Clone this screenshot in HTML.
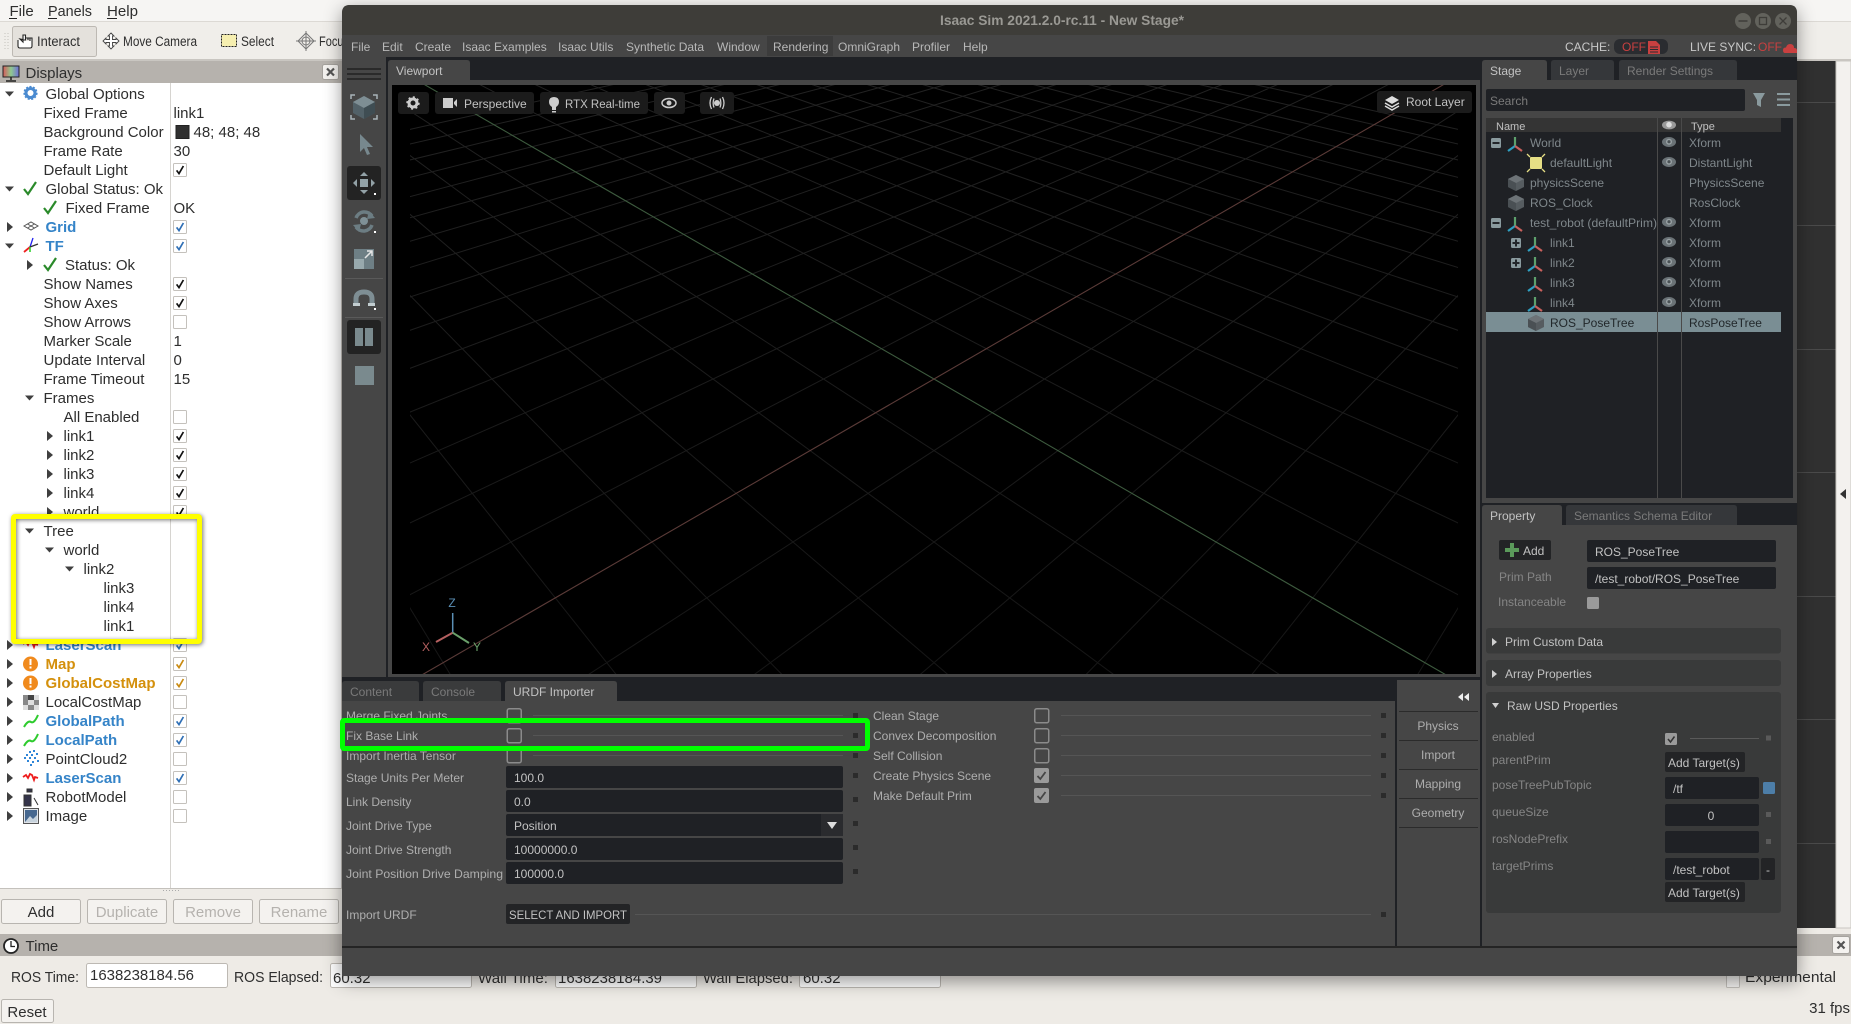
<!DOCTYPE html>
<html lang="en">
<head>
<meta charset="utf-8">
<title>Isaac Sim and RViz</title>
<style>
html,body{margin:0;padding:0;width:1851px;height:1024px;overflow:hidden;background:#eeebe6}
svg{display:block;position:absolute;left:0;top:0}
text{font-family:"Liberation Sans",sans-serif;white-space:pre}
.r{font-size:15px;fill:#2e2e2e}
.b{font-size:15px;fill:#3584c8;font-weight:bold}
.o{font-size:15px;fill:#d4900c;font-weight:bold}
.d{font-size:15px;fill:#b5b2ae}
.m{font-size:12px;fill:#b8b8b8}
.l{font-size:12px;fill:#aeaeae}
.g{font-size:12px;fill:#858585}
.t{font-size:12px;fill:#7f878b}
.f{font-size:12px;fill:#c2c2c2}
.i{font-size:12px;fill:#7a7a7a}
</style>
</head>
<body>
<svg xmlns="http://www.w3.org/2000/svg" width="1851" height="1024" viewBox="0 0 1851 1024">
<defs>
<filter id="sh" x="-5%" y="-5%" width="110%" height="110%"><feDropShadow dx="0" dy="5" stdDeviation="9" flood-color="#000" flood-opacity=".42"/></filter>
<linearGradient id="mon" x1="0" x2="1"><stop offset="0" stop-color="#d65a5a"/><stop offset=".5" stop-color="#8fc98f"/><stop offset="1" stop-color="#6f6fd8"/></linearGradient>
<linearGradient id="gl" gradientUnits="userSpaceOnUse" x1="0" y1="85" x2="0" y2="674"><stop offset="0" stop-color="#222"/><stop offset="1" stop-color="#161616"/></linearGradient>
<clipPath id="vp"><rect x="410" y="85" width="1048" height="589"/></clipPath>
<g id="cb"><rect x=".5" y=".5" width="13" height="13" rx="1" fill="#fff" stroke="#c4c1bc"/></g>
<g id="ck"><use href="#cb"/><path d="M3.6 7.4 6 10.6 10.4 3" fill="none" stroke="#111" stroke-width="1.7"/></g>
<g id="cu"><use href="#cb"/><path d="M3.6 7.4 6 10.6 10.4 3" fill="none" stroke="#2f6fb5" stroke-width="1.7"/></g>
<g id="co"><use href="#cb"/><path d="M3.6 7.4 6 10.6 10.4 3" fill="none" stroke="#c98a10" stroke-width="1.7"/></g>
<path id="tr" d="M0-5 6 0 0 5Z" fill="#3f3f3f"/>
<path id="td" d="M-4.5-2.5H4.5L0 2.5Z" fill="#3f3f3f"/>
<path id="gc" d="M0 7 4 12 12 0" fill="none" stroke="#2a8a2a" stroke-width="2.2"/>
<g id="las"><path d="M0 1 3-1 5 2 7-2 9-1 11 4 12 1 15 2" fill="none" stroke="#ee1c1c" stroke-width="1.8"/></g>
<g id="pth"><path d="M0 6Q4-1 7 1 10 3 14-6" fill="none" stroke="#2ecb2e" stroke-width="2"/></g>
<g id="ex" stroke-width="2.2" fill="none"><path d="M0 0V-9" stroke="#5da06c"/><path d="M0 0-7 5" stroke="#2e9fc0"/><path d="M0 0 7 5" stroke="#c8605c"/></g>
<g id="eye"><ellipse cx="0" cy="0" rx="7" ry="5" fill="#6a7276"/><circle cx="0" cy="-.3" r="3" fill="#9aa2a5"/><circle cx="0" cy="-.3" r="1.6" fill="#4a5255"/></g>
<g id="cube"><path d="M0-8 8-4V4L0 8-8 4V-4Z" fill="#565c60"/><path d="M0-8 8-4 0 0-8-4Z" fill="#6d7377"/><path d="M0 0V8L-8 4V-4Z" fill="#4a5054"/></g>
<path id="sq" d="M0 0H5V5H0Z" fill="#2b2b2b"/>
<g id="uc"><rect x=".75" y=".75" width="14" height="14" rx="2" fill="none" stroke="#8b8b8b" stroke-width="1.5"/></g>
<g id="uk"><rect width="15" height="15" rx="2" fill="#9a9a9a"/><path d="M3.5 8 6.3 11 11.5 4" fill="none" stroke="#454545" stroke-width="1.8"/></g>
<g id="minus"><rect x="-5" y="-5" width="10" height="10" rx="1.5" fill="#8a9a9e"/><rect x="-3.5" y="-1" width="7" height="2" fill="#23262a"/></g>
<g id="plus"><rect x="-5" y="-5" width="10" height="10" rx="1.5" fill="#8a9a9e"/><path d="M-3.5-1H-1V-3.5H1V-1H3.5V1H1V3.5H-1V1H-3.5Z" fill="#23262a"/></g>
</defs>

<!-- RViz base -->
<rect width="1851" height="1024" fill="#eeebe6"/>
<rect width="1851" height="22" fill="#f6f5f3"/>
<rect y="21" width="1851" height="1" fill="#dcd9d4"/>
<rect y="22" width="1851" height="38" fill="#f0eeea"/>
<rect y="59" width="1851" height="2" fill="#c9c6c1"/>
<text class="r" x="9.5" y="16">File</text><text class="r" x="48" y="16" textLength="44" lengthAdjust="spacingAndGlyphs">Panels</text><text class="r" x="107" y="16" textLength="31" lengthAdjust="spacingAndGlyphs">Help</text>
<rect x="9" y="18" width="8" height="1" fill="#222"/><rect x="48" y="18" width="9" height="1" fill="#222"/><rect x="107" y="18" width="10" height="1" fill="#222"/>
<path d="M5 33V49M8 33V49" stroke="#c4c1bc" stroke-width="1" stroke-dasharray="1 2"/>
<rect x="12.5" y="26.5" width="84" height="30" rx="2" fill="#e4e1dc" stroke="#bdb9b3"/>
<path d="M18 40V46Q18 48 20 48H30Q32 48 32 46V38H30V41M30 38H28V40M28 38H25.5V40M25.5 40V35H23V42L20 39Z" fill="#fff" stroke="#222" stroke-width="1.1"/>
<text class="r" style="font-size:13.5px" x="37" y="46" textLength="43" lengthAdjust="spacingAndGlyphs">Interact</text>
<path d="M111 33 114 36H112.5V39.5H116V38L119 41 116 44V42.5H112.5V46H114L111 49 108 46H109.5V42.5H106V44L103 41 106 38V39.5H109.5V36H108Z" fill="#fff" stroke="#444" stroke-width=".9"/>
<text class="r" style="font-size:13.5px" x="123" y="46" textLength="74" lengthAdjust="spacingAndGlyphs">Move Camera</text>
<rect x="221.5" y="34.5" width="15" height="12" fill="#f6efb0" stroke="#222" stroke-dasharray="2 1"/>
<text class="r" style="font-size:13.5px" x="241" y="46" textLength="33" lengthAdjust="spacingAndGlyphs">Select</text>
<path d="M306 33 314 41 306 49 298 41Z M306 31V51M296 41H316" fill="none" stroke="#777" stroke-width="1"/><circle cx="306" cy="41" r="4" fill="none" stroke="#777"/>
<text class="r" style="font-size:13.5px" x="319" y="46" textLength="30" lengthAdjust="spacingAndGlyphs">Focus</text>

<rect y="61" width="342" height="22" fill="#b6b2ad"/>
<rect x="3" y="66" width="16" height="11" fill="url(#mon)" stroke="#222" stroke-width="1"/><path d="M11 77V80M6 81H16" stroke="#222" stroke-width="1.5"/>
<text class="r" x="25.5" y="78">Displays</text>
<rect x="322.5" y="64.5" width="16" height="15" rx="2" fill="#f4f2ef" stroke="#a5a29d"/><path d="M327 68.5 334 75.5M334 68.5 327 75.5" stroke="#555" stroke-width="2.2"/>

<rect y="83" width="341" height="805" fill="#fff"/>
<rect x="170" y="83" width="1" height="805" fill="#d6d4d0"/>
<rect y="888" width="342" height="1" fill="#c4c1bc"/>
<rect x="341" y="83" width="1" height="805" fill="#c4c1bc"/>
<path d="M163 890.5H180" stroke="#aaa" stroke-dasharray="1 2"/>

<!-- arrows -->
<use href="#td" x="9.5" y="94"/><use href="#td" x="9.5" y="189"/><use href="#tr" x="7" y="227"/><use href="#td" x="9.5" y="246"/><use href="#tr" x="27" y="265"/><use href="#td" x="29.5" y="398"/>
<use href="#tr" x="47" y="436"/><use href="#tr" x="47" y="455"/><use href="#tr" x="47" y="474"/><use href="#tr" x="47" y="493"/><use href="#tr" x="47" y="512"/>
<use href="#td" x="29.5" y="531"/><use href="#td" x="49.5" y="550"/><use href="#td" x="69.5" y="569"/>
<use href="#tr" x="7" y="645"/><use href="#tr" x="7" y="664"/><use href="#tr" x="7" y="683"/><use href="#tr" x="7" y="702"/><use href="#tr" x="7" y="721"/><use href="#tr" x="7" y="740"/><use href="#tr" x="7" y="759"/><use href="#tr" x="7" y="778"/><use href="#tr" x="7" y="797"/><use href="#tr" x="7" y="816"/>

<!-- rviz text -->
<text class="r" x="45.5" y="99">Global Options</text>
<text class="r" x="43.5" y="118">Fixed Frame</text><text class="r" x="173.5" y="118">link1</text>
<text class="r" x="43.5" y="137">Background Color</text><rect x="176" y="125.5" width="13" height="13" fill="#303030" stroke="#222"/><text class="r" x="193.5" y="137">48; 48; 48</text>
<text class="r" x="43.5" y="156">Frame Rate</text><text class="r" x="173.5" y="156">30</text>
<text class="r" x="43.5" y="175">Default Light</text>
<text class="r" x="45.5" y="194">Global Status: Ok</text>
<text class="r" x="65.5" y="213">Fixed Frame</text><text class="r" x="173.5" y="213">OK</text>
<text class="b" x="45.5" y="232">Grid</text>
<text class="b" x="45.5" y="251">TF</text>
<text class="r" x="65" y="270">Status: Ok</text>
<text class="r" x="43.5" y="289">Show Names</text>
<text class="r" x="43.5" y="308">Show Axes</text>
<text class="r" x="43.5" y="327">Show Arrows</text>
<text class="r" x="43.5" y="346">Marker Scale</text><text class="r" x="173.5" y="346">1</text>
<text class="r" x="43.5" y="365">Update Interval</text><text class="r" x="173.5" y="365">0</text>
<text class="r" x="43.5" y="384">Frame Timeout</text><text class="r" x="173.5" y="384">15</text>
<text class="r" x="43.5" y="403">Frames</text>
<text class="r" x="63.5" y="422">All Enabled</text>
<text class="r" x="63.5" y="441">link1</text><text class="r" x="63.5" y="460">link2</text><text class="r" x="63.5" y="479">link3</text><text class="r" x="63.5" y="498">link4</text><text class="r" x="63.5" y="517">world</text>
<text class="r" x="43.5" y="536">Tree</text><text class="r" x="63.5" y="555">world</text><text class="r" x="83.5" y="574">link2</text>
<text class="r" x="103.5" y="593">link3</text><text class="r" x="103.5" y="612">link4</text><text class="r" x="103.5" y="631">link1</text>
<text class="b" x="45.5" y="650">LaserScan</text>
<text class="o" x="45.5" y="669">Map</text>
<text class="o" x="45.5" y="688">GlobalCostMap</text>
<text class="r" x="45.5" y="707">LocalCostMap</text>
<text class="b" x="45.5" y="726">GlobalPath</text>
<text class="b" x="45.5" y="745">LocalPath</text>
<text class="r" x="45.5" y="764">PointCloud2</text>
<text class="b" x="45.5" y="783">LaserScan</text>
<text class="r" x="45.5" y="802">RobotModel</text>
<text class="r" x="45.5" y="821">Image</text>

<!-- checkboxes -->
<use href="#ck" x="173" y="163"/><use href="#cu" x="173" y="220"/><use href="#cu" x="173" y="239"/><use href="#ck" x="173" y="277"/><use href="#ck" x="173" y="296"/><use href="#cb" x="173" y="315"/><use href="#cb" x="173" y="410"/><use href="#ck" x="173" y="429"/><use href="#ck" x="173" y="448"/><use href="#ck" x="173" y="467"/><use href="#ck" x="173" y="486"/><use href="#ck" x="173" y="505"/><use href="#cu" x="173" y="638"/><use href="#co" x="173" y="657"/><use href="#co" x="173" y="676"/><use href="#cb" x="173" y="695"/><use href="#cu" x="173" y="714"/><use href="#cu" x="173" y="733"/><use href="#cb" x="173" y="752"/><use href="#cu" x="173" y="771"/><use href="#cb" x="173" y="790"/><use href="#cb" x="173" y="809"/>

<!-- rviz icons -->
<circle cx="30.5" cy="93" r="4.5" fill="none" stroke="#4a8ad0" stroke-width="3"/><circle cx="30.5" cy="93" r="6.2" fill="none" stroke="#4a8ad0" stroke-width="1.8" stroke-dasharray="2 1.5"/>
<use href="#gc" x="24" y="182"/><use href="#gc" x="44" y="201"/><use href="#gc" x="44" y="258"/>
<path d="M24 226 31 222 38 226 31 230ZM27.5 224 34.5 228M34.5 224 27.5 228" fill="none" stroke="#555"/>
<path d="M30 247 33 238" stroke="#2222ee" stroke-width="1.3"/><path d="M30 247 38 244" stroke="#333" stroke-width="1.3"/><path d="M30 247 24 252" stroke="#ee2222" stroke-width="1.8"/><path d="M30 247 30 252" stroke="#22cc22" stroke-width="1.5"/>
<use href="#las" x="23" y="643"/>
<circle cx="30.5" cy="664" r="7.5" fill="#f08a1d"/><rect x="29.5" y="659" width="2" height="6" fill="#fff"/><rect x="29.5" y="666.5" width="2" height="2" fill="#fff"/>
<circle cx="30.5" cy="683" r="7.5" fill="#f08a1d"/><rect x="29.5" y="678" width="2" height="6" fill="#fff"/><rect x="29.5" y="685.5" width="2" height="2" fill="#fff"/>
<path d="M23 695H39V710H23Z" fill="#888"/><path d="M28 700H34V705H28ZM34 695H39V700H34ZM23 705H28V710H23ZM34 705H39V710H34Z" fill="#dedede"/><path d="M28 695H34V700H28Z" fill="#444"/>
<use href="#pth" x="24" y="721"/><use href="#pth" x="24" y="740"/>
<path d="M29 752h2M33 751h2M26 755h2M31 755h2M36 754h2M24 758h2M29 758h2M34 758h2M27 761h2M32 762h2M37 761h2M30 765h2" stroke="#2f86d8" stroke-width="2"/>
<use href="#las" x="23" y="776"/>
<path d="M27 789H32V792H27ZM24 795H31V806H24ZM34 798 38 805" fill="#34344a" stroke="#333"/>
<rect x="23.5" y="808.5" width="15" height="15" fill="#dfe3e8" stroke="#555"/><rect x="25" y="810" width="12" height="12" fill="#47688f"/><path d="M25 822 30 816 33 819 37 815V822Z" fill="#c6d2dc"/>

<!-- yellow highlight -->
<rect x="13.5" y="516.5" width="186" height="125" rx="1.5" fill="none" stroke="#ffff00" stroke-width="5" style="filter:drop-shadow(1px 1px 2px rgba(0,0,0,.55))"/>

<!-- rviz buttons -->
<g fill="#f4f2ef" stroke="#b8b5b0"><rect x="1.5" y="899.5" width="79" height="24" rx="2"/><rect x="87.5" y="899.5" width="79" height="24" rx="2"/><rect x="173.5" y="899.5" width="79" height="24" rx="2"/><rect x="259.5" y="899.5" width="79" height="24" rx="2"/></g>
<text class="r" x="41" y="917" text-anchor="middle">Add</text><text class="d" x="127" y="917" text-anchor="middle">Duplicate</text><text class="d" x="213" y="917" text-anchor="middle">Remove</text><text class="d" x="299" y="917" text-anchor="middle">Rename</text>
<rect y="934" width="1851" height="22" fill="#b6b2ad"/>
<circle cx="11" cy="946" r="7" fill="#fff" stroke="#222" stroke-width="1.8"/><path d="M11 941V946.5H15" fill="none" stroke="#222" stroke-width="1.3"/>
<text class="r" x="25.5" y="951">Time</text>
<rect x="1832.5" y="936.5" width="17" height="17" rx="2" fill="#f4f2ef" stroke="#a5a29d"/><path d="M1837.5 941.5 1844.5 948.5M1844.5 941.5 1837.5 948.5" stroke="#555" stroke-width="2.2"/>
<text class="r" x="11" y="982" textLength="68" lengthAdjust="spacingAndGlyphs">ROS Time:</text>
<rect x="86.5" y="963.5" width="141" height="24" rx="2" fill="#fff" stroke="#bdb9b3"/><text class="r" x="90" y="980" textLength="104" lengthAdjust="spacingAndGlyphs">1638238184.56</text>
<text class="r" x="234" y="982" textLength="89" lengthAdjust="spacingAndGlyphs">ROS Elapsed:</text>
<rect x="330.5" y="963.5" width="141" height="24" rx="2" fill="#fff" stroke="#bdb9b3"/><text class="r" x="333" y="983">60.32</text>
<text class="r" x="478" y="983" textLength="70" lengthAdjust="spacingAndGlyphs">Wall Time:</text>
<rect x="555.5" y="963.5" width="141" height="24" rx="2" fill="#fff" stroke="#bdb9b3"/><text class="r" x="558" y="983" textLength="104" lengthAdjust="spacingAndGlyphs">1638238184.39</text>
<text class="r" x="703" y="983" textLength="90" lengthAdjust="spacingAndGlyphs">Wall Elapsed:</text>
<rect x="799.5" y="963.5" width="141" height="24" rx="2" fill="#fff" stroke="#bdb9b3"/><text class="r" x="803" y="983">60.32</text>
<rect x="1.5" y="999.5" width="52" height="23" rx="2" fill="#f4f2ef" stroke="#b8b5b0"/><text class="r" x="27" y="1017" text-anchor="middle">Reset</text>
<rect x="1726.5" y="974.5" width="13" height="13" rx="1" fill="#f6f5f3" stroke="#c4c1bc"/><text class="r" x="1745" y="982" textLength="91" lengthAdjust="spacingAndGlyphs">Experimental</text>
<text class="r" x="1850" y="1013" text-anchor="end">31 fps</text>

<!-- right of window -->
<rect x="1797" y="61" width="39" height="867" fill="#303030"/>
<path d="M1797 102.5H1836M1797 225.5H1836M1797 349.5H1836M1797 472.5H1836M1797 596.5H1836M1797 719.5H1836M1797 843.5H1836" stroke="#4a4a4a"/>
<rect x="1836" y="61" width="15" height="867" fill="#f3f1ee" stroke="#c9c6c1"/>
<path d="M1846 489V499L1840 494Z" fill="#333"/>

<!-- Isaac window -->
<path d="M342 976V13Q342 5 350 5H1789Q1797 5 1797 13V976Z" fill="#464646" filter="url(#sh)"/>
<path d="M342 35V13Q342 5 350 5H1789Q1797 5 1797 13V35Z" fill="#3e3d39"/>
<text x="940" y="25" textLength="244" lengthAdjust="spacingAndGlyphs" style="font-size:13.5px;font-weight:bold;fill:#9a9994">Isaac Sim 2021.2.0-rc.11 - New Stage*</text>
<circle cx="1743" cy="21" r="8" fill="#62625c"/><circle cx="1763" cy="21" r="8" fill="#62625c"/><circle cx="1783" cy="21" r="8" fill="#62625c"/>
<path d="M1738.5 21H1747.5" stroke="#3e3d39" stroke-width="1.5"/><rect x="1759.5" y="17.5" width="7" height="7" fill="none" stroke="#3e3d39" stroke-width="1.3"/><path d="M1779.5 17.5 1786.5 24.5M1786.5 17.5 1779.5 24.5" stroke="#3e3d39" stroke-width="1.3"/>
<rect x="342" y="35" width="1455" height="22" fill="#464646"/>
<rect x="767" y="36" width="66" height="20" fill="#3c3c3c"/>
<text class="m" x="351" y="51">File</text><text class="m" x="382" y="51">Edit</text><text class="m" x="415" y="51">Create</text><text class="m" x="462" y="51">Isaac Examples</text><text class="m" x="558" y="51">Isaac Utils</text><text class="m" x="626" y="51">Synthetic Data</text><text class="m" x="717" y="51">Window</text><text class="m" x="773" y="51">Rendering</text><text class="m" x="838" y="51">OmniGraph</text><text class="m" x="912" y="51">Profiler</text><text class="m" x="963" y="51">Help</text>
<text class="m" x="1565" y="51" style="fill:#c8c8c8">CACHE:</text>
<rect x="1614" y="39" width="54" height="15" rx="6" fill="#2a2c30"/>
<text x="1622" y="51" style="font-size:12px;fill:#c94040">OFF</text>
<path d="M1648 41H1656L1660 45V54H1648Z" fill="#c94040"/><path d="M1650 47H1658M1650 49.5H1658M1650 52H1658" stroke="#2a2c30"/>
<text class="m" x="1690" y="51" style="fill:#c8c8c8">LIVE SYNC:</text>
<text x="1758" y="51" style="font-size:12px;fill:#c94040">OFF</text>
<path d="M1785 53Q1783 53 1783 50 1783 47.5 1786 47.5 1787 44 1790 44 1794 44 1794 48 1797 48 1797 50.5V53Z" fill="#c94040"/>

<!-- dark body -->
<rect x="342" y="57" width="1455" height="891" fill="#1f2125"/>
<rect x="342" y="57" width="44" height="620" fill="#464646"/>
<path d="M347 69H381M347 74H381M347 79H381" stroke="#2a2a2a" stroke-width="2"/>
<path d="M351 99V95H355M373 95H377V99M351 115V119H355M373 119H377V115" fill="none" stroke="#a9b4b8" stroke-width="1.5"/>
<path d="M364 96 375 102V113L364 119 353 113V102Z" fill="#526168"/><path d="M364 96 375 102 364 108 353 102Z" fill="#7e8e94"/><path d="M364 108V119L375 113V102Z" fill="#3f4d53"/>
<path d="M360 134V152L364 148 367 155 370 154 367 147H373Z" fill="#77888e"/>
<rect x="347" y="166" width="34" height="34" rx="3" fill="#232323"/>
<path d="M364 172 368 176H360ZM364 194 368 190H360ZM353 183 357 179V187ZM375 183 371 179V187Z" fill="#93a2a7"/><rect x="360" y="179" width="8" height="8" fill="#93a2a7"/><rect x="374" y="193" width="2" height="2" fill="#fff"/>
<path d="M356 218A9 9 0 0 1 372 216M372 225A9 9 0 0 1 356 227" fill="none" stroke="#6c7d83" stroke-width="3.5"/><path d="M369 211 375 218 367 219Z M359 232 353 225 361 224Z" fill="#6c7d83"/><circle cx="364" cy="221" r="4" fill="#7f9096"/><rect x="374" y="231" width="2" height="2" fill="#fff"/>
<rect x="354" y="249" width="20" height="20" fill="#6e7f85"/><rect x="354" y="259" width="10" height="10" fill="#98a9ad"/><path d="M365 258 372 251M367 251H372V256" fill="none" stroke="#e6e6e6" stroke-width="1.5"/>
<rect x="345" y="278" width="38" height="1" fill="#5a5a5a"/>
<path d="M356 306V299Q356 292 364 292 372 292 372 299V306" fill="none" stroke="#7e8e94" stroke-width="5"/><rect x="353" y="303" width="7" height="3" fill="#c2cdd0"/><rect x="368" y="303" width="7" height="3" fill="#c2cdd0"/><rect x="374" y="308" width="2" height="2" fill="#fff"/>
<rect x="345" y="317" width="38" height="1" fill="#5a5a5a"/>
<rect x="347" y="320" width="34" height="34" rx="3" fill="#232323"/><rect x="355" y="328" width="8" height="18" fill="#7a8a8e"/><rect x="365" y="328" width="8" height="18" fill="#7a8a8e"/>
<rect x="355" y="366" width="19" height="19" fill="#7a8a8e"/>

<!-- viewport -->
<rect x="388" y="80" width="1092" height="597" fill="#464646"/>
<path d="M388 80V63Q388 60 391 60H467Q470 60 470 63V80Z" fill="#464646"/>
<text class="f" x="396" y="75">Viewport</text>
<rect x="392" y="85" width="1084" height="589" fill="#000"/>
<g clip-path="url(#vp)">
<path stroke="url(#gl)" stroke-width="1" fill="none" d="M-87-211L647.8 1000M-87-211L874.6 1000M-87-211L1101.4 1000M-87-211L1328.2 1000M-87-211L1555 1000M-87-211L1781.8 1000M-87-211L2235.4 1000M-87-211L2462.2 1000M-87-211L2689 1000M-87-211L2915.8 1000M-87-211L3142.6 1000M-87-211L3369.4 1000M-87-211L3596.2 1000M-87-211L3823 1000M-87-211L4049.8 1000M-87-211L4276.6 1000M-87-211L4503.4 1000M-87-211L4730.2 1000M-87-211L4957 1000M-87-211L5183.8 1000M-87-211L5410.6 1000M1955-211L1220.2 1000M1955-211L993.4 1000M1955-211L766.6 1000M1955-211L539.8 1000M1955-211L313 1000M1955-211L86.2 1000M1955-211L-367.4 1000M1955-211L-594.2 1000M1955-211L-821 1000M1955-211L-1047.8 1000M1955-211L-1274.6 1000M1955-211L-1501.4 1000M1955-211L-1728.2 1000M1955-211L-1955 1000M1955-211L-2181.8 1000M1955-211L-2408.6 1000M1955-211L-2635.4 1000M1955-211L-2862.2 1000M1955-211L-3089 1000M1955-211L-3315.8 1000M1955-211L-3542.6 1000"/>
<path stroke="#3d5a3e" stroke-width="1.1" fill="none" d="M-87-211L2008.6 1000"/>
<path stroke="#5b3b38" stroke-width="1.1" fill="none" d="M1955-211L-140.6 1000"/>
</g>
<!-- axis gizmo -->
<path d="M452.7 632.7V613" stroke="#5b8fb5" stroke-width="1.5"/><path d="M452.7 632.7 436 642" stroke="#b56060" stroke-width="2"/><path d="M452.7 632.7 469 643" stroke="#6aa06a" stroke-width="2"/>
<text x="452" y="607" text-anchor="middle" style="font-size:12px;fill:#5b8fb5">Z</text><text x="426" y="651" text-anchor="middle" style="font-size:12px;fill:#b56060">X</text><text x="477" y="651" text-anchor="middle" style="font-size:12px;fill:#6aa06a">Y</text>
<!-- overlay buttons -->
<g fill="#1b1b1b"><rect x="398" y="92" width="31" height="22" rx="3"/><rect x="435" y="92" width="99" height="22" rx="3"/><rect x="540" y="92" width="108" height="22" rx="3"/><rect x="654" y="92" width="31" height="22" rx="3"/><rect x="700" y="92" width="34" height="22" rx="3"/><rect x="1377" y="91" width="95" height="22" rx="3"/></g>
<circle cx="413" cy="103" r="4" fill="none" stroke="#ccc" stroke-width="3"/><circle cx="413" cy="103" r="5.8" fill="none" stroke="#ccc" stroke-width="1.8" stroke-dasharray="2 2.5"/>
<path d="M443 98H453V108H443ZM454 102 457 99V107L454 104Z" fill="#ccc"/>
<text class="f" x="464" y="108">Perspective</text>
<path d="M554 97Q549 97 549 102 549 105 552 107V110H556V107Q559 105 559 102 559 97 554 97Z" fill="#ccc"/><rect x="552" y="111" width="4" height="1.5" fill="#ccc"/>
<text class="f" x="565" y="108" textLength="75" lengthAdjust="spacingAndGlyphs">RTX Real-time</text>
<ellipse cx="669" cy="103" rx="7" ry="4.5" fill="none" stroke="#ccc" stroke-width="1.5"/><circle cx="669" cy="103" r="2.5" fill="#ccc"/>
<circle cx="717" cy="103" r="3" fill="#ccc"/><path d="M711.5 97Q708.5 103 711.5 109M714 98.5Q712.3 103 714 107.5M722.5 97Q725.5 103 722.5 109M720 98.5Q721.7 103 720 107.5" fill="none" stroke="#ccc" stroke-width="1.3"/>
<path d="M1392 96 1399 100 1392 104 1385 100Z" fill="#ddd"/><path d="M1385 103 1392 107 1399 103M1385 106 1392 110 1399 106" fill="none" stroke="#ddd" stroke-width="1.5"/>
<text class="f" x="1406" y="106">Root Layer</text>

<!-- Stage panel -->
<rect x="1482" y="80" width="315" height="423" fill="#464646"/>
<path d="M1482 80V63Q1482 60 1485 60H1544Q1547 60 1547 63V80Z" fill="#464646"/>
<path d="M1551 80V63Q1551 60 1554 60H1611Q1614 60 1614 63V80Z" fill="#35373a"/>
<path d="M1619 80V63Q1619 60 1622 60H1734Q1737 60 1737 63V80Z" fill="#35373a"/>
<text class="f" x="1490" y="75">Stage</text><text class="i" x="1559" y="75">Layer</text><text class="i" x="1627" y="75">Render Settings</text>
<rect x="1486" y="89" width="259" height="22" rx="2" fill="#1f2125"/><text class="i" x="1490" y="105">Search</text>
<path d="M1753 93H1765L1761 100V107L1757 105V100Z" fill="#8a9a9e"/>
<path d="M1777 94H1790M1777 99.5H1790M1777 105H1790" stroke="#8a9a9e" stroke-width="2"/>
<rect x="1486" y="118" width="307" height="380" fill="#1f2125"/>
<rect x="1486" y="118" width="295" height="14" fill="#343434"/>
<rect x="1486" y="312" width="295" height="20" fill="#7a8e94"/>
<rect x="1657" y="118" width="1" height="380" fill="#4a4a4a"/><rect x="1681" y="118" width="1" height="380" fill="#4a4a4a"/>
<text x="1496" y="130" style="font-size:11px;fill:#c0c0c0">Name</text><text x="1691" y="130" style="font-size:11px;fill:#c0c0c0">Type</text>
<g transform="translate(1669 125)"><ellipse rx="7" ry="4.4" fill="#999"/><circle cy="-.3" r="2.8" fill="#ddd"/></g>
<use href="#minus" x="1496" y="143"/><use href="#ex" x="1515" y="146"/><text class="t" x="1530" y="147">World</text><text class="t" x="1689" y="147">Xform</text>
<rect x="1530" y="157" width="12" height="12" rx="1" fill="#e6df85"/><path d="M1527 154 1530 157M1545 154 1542 157M1527 172 1530 169M1545 172 1542 169" stroke="#e6df85" stroke-width="1.3"/>
<text class="t" x="1550" y="167">defaultLight</text><text class="t" x="1689" y="167">DistantLight</text>
<use href="#cube" x="1516" y="183"/><text class="t" x="1530" y="187">physicsScene</text><text class="t" x="1689" y="187">PhysicsScene</text>
<use href="#cube" x="1516" y="203"/><text class="t" x="1530" y="207">ROS_Clock</text><text class="t" x="1689" y="207">RosClock</text>
<use href="#minus" x="1496" y="223"/><use href="#ex" x="1515" y="226"/><text class="t" x="1530" y="227" textLength="127" lengthAdjust="spacingAndGlyphs">test_robot (defaultPrim)</text><text class="t" x="1689" y="227">Xform</text>
<use href="#plus" x="1516" y="243"/><use href="#ex" x="1535" y="246"/><text class="t" x="1550" y="247">link1</text><text class="t" x="1689" y="247">Xform</text>
<use href="#plus" x="1516" y="263"/><use href="#ex" x="1535" y="266"/><text class="t" x="1550" y="267">link2</text><text class="t" x="1689" y="267">Xform</text>
<use href="#ex" x="1535" y="286"/><text class="t" x="1550" y="287">link3</text><text class="t" x="1689" y="287">Xform</text>
<use href="#ex" x="1535" y="306"/><text class="t" x="1550" y="307">link4</text><text class="t" x="1689" y="307">Xform</text>
<use href="#cube" x="1536" y="323"/><text x="1550" y="327" style="font-size:12px;fill:#22282b">ROS_PoseTree</text><text x="1689" y="327" style="font-size:12px;fill:#22282b">RosPoseTree</text>
<use href="#eye" x="1669" y="142"/><use href="#eye" x="1669" y="162"/><use href="#eye" x="1669" y="222"/><use href="#eye" x="1669" y="242"/><use href="#eye" x="1669" y="262"/><use href="#eye" x="1669" y="282"/><use href="#eye" x="1669" y="302"/>

<!-- Property panel -->
<rect x="1482" y="525" width="315" height="421" fill="#464646"/>
<path d="M1482 525V508Q1482 505 1485 505H1559Q1562 505 1562 508V525Z" fill="#464646"/>
<path d="M1566 525V508Q1566 505 1569 505H1734Q1737 505 1737 508V525Z" fill="#35373a"/>
<text class="f" x="1490" y="520">Property</text><text class="i" x="1574" y="520">Semantics Schema Editor</text>
<rect x="1499" y="540" width="52" height="20" rx="2" fill="#232426"/><path d="M1510 543H1514V548H1519V552H1514V557H1510V552H1505V548H1510Z" fill="#5b9a5b"/>
<text class="f" x="1523" y="555">Add</text>
<rect x="1587" y="540" width="189" height="22" rx="2" fill="#1f2125"/><text class="f" x="1595" y="556">ROS_PoseTree</text>
<text class="g" x="1499" y="581">Prim Path</text>
<rect x="1587" y="567" width="189" height="22" rx="2" fill="#1f2125"/><text class="f" x="1595" y="583">/test_robot/ROS_PoseTree</text>
<text class="g" x="1498" y="606">Instanceable</text>
<rect x="1587" y="597" width="12" height="12" rx="1.5" fill="#9a9a9a"/>
<g fill="#393a3a"><rect x="1486" y="628" width="295" height="25.5" rx="3"/><rect x="1486" y="660" width="295" height="26" rx="3"/><rect x="1486" y="692" width="295" height="221" rx="3"/></g>
<path d="M1492 638 1497 642 1492 646Z" fill="#d0d0d0"/><text class="f" x="1505" y="646">Prim Custom Data</text>
<path d="M1492 670 1497 674 1492 678Z" fill="#d0d0d0"/><text class="f" x="1505" y="678">Array Properties</text>
<path d="M1492 703H1499L1495.5 708Z" fill="#d0d0d0"/><text class="f" x="1507" y="710">Raw USD Properties</text>
<text class="g" x="1492" y="741">enabled</text>
<rect x="1665" y="733" width="12" height="12" rx="1.5" fill="#9a9a9a"/><path d="M1668 739 1670.5 742 1674.5 736.5" fill="none" stroke="#333" stroke-width="1.5"/>
<rect x="1690" y="738" width="69" height="1" fill="#5a5a5a"/><rect x="1766" y="735.5" width="5" height="5" fill="#5a5a5a"/>
<text class="g" x="1492" y="764">parentPrim</text>
<rect x="1665" y="752" width="80" height="20" rx="2" fill="#232426"/><text class="f" x="1668" y="767">Add Target(s)</text>
<text class="g" x="1492" y="789">poseTreePubTopic</text>
<rect x="1665" y="777" width="94" height="22" rx="2" fill="#1f2125"/><text class="f" x="1673" y="793">/tf</text>
<rect x="1763" y="782" width="12" height="12" rx="1.5" fill="#4d7ea8"/>
<text class="g" x="1492" y="816">queueSize</text>
<rect x="1665" y="804" width="94" height="22" rx="2" fill="#1f2125"/><text class="f" x="1711" y="820" text-anchor="middle">0</text><rect x="1766" y="812" width="5" height="5" fill="#5a5a5a"/>
<text class="g" x="1492" y="843">rosNodePrefix</text>
<rect x="1665" y="831" width="94" height="22" rx="2" fill="#1f2125"/><rect x="1766" y="839" width="5" height="5" fill="#5a5a5a"/>
<text class="g" x="1492" y="870">targetPrims</text>
<rect x="1665" y="858" width="94" height="22" rx="2" fill="#1f2125"/><text class="f" x="1673" y="874">/test_robot</text>
<rect x="1761" y="858" width="14" height="22" rx="2" fill="#232426"/><text class="f" x="1768" y="874" text-anchor="middle">-</text>
<rect x="1665" y="882" width="80" height="20" rx="2" fill="#232426"/><text class="f" x="1668" y="897">Add Target(s)</text>

<!-- Bottom tabs and URDF -->
<rect x="342" y="701" width="1053" height="245" fill="#464646"/>
<path d="M342 701V684Q342 681 345 681H416Q419 681 419 684V701Z" fill="#3a3b3c"/>
<path d="M423 701V684Q423 681 426 681H498Q501 681 501 684V701Z" fill="#3a3b3c"/>
<path d="M505 701V684Q505 681 508 681H614Q617 681 617 684V701Z" fill="#464646"/>
<text class="i" x="350" y="696">Content</text><text class="i" x="431" y="696">Console</text><text class="f" x="513" y="696">URDF Importer</text>

<text class="l" x="346" y="720">Merge Fixed Joints</text><use href="#uc" x="506.5" y="708"/><rect x="533" y="715" width="310" height="1" fill="#555"/><use href="#sq" x="853" y="713"/>
<text class="l" x="346" y="740">Fix Base Link</text><use href="#uc" x="506.5" y="728"/><rect x="533" y="735" width="310" height="1" fill="#555"/><use href="#sq" x="853" y="733"/>
<text class="l" x="346" y="760">Import Inertia Tensor</text><use href="#uc" x="506.5" y="748"/><rect x="533" y="755" width="310" height="1" fill="#555"/><use href="#sq" x="853" y="753"/>
<text class="l" x="346" y="782">Stage Units Per Meter</text><rect x="506" y="766" width="337" height="22" rx="2" fill="#1f2125"/><text class="f" x="514" y="782">100.0</text><use href="#sq" x="853" y="773"/>
<text class="l" x="346" y="806">Link Density</text><rect x="506" y="790" width="337" height="22" rx="2" fill="#1f2125"/><text class="f" x="514" y="806">0.0</text><use href="#sq" x="853" y="797"/>
<text class="l" x="346" y="830">Joint Drive Type</text><rect x="506" y="814" width="337" height="22" rx="2" fill="#1f2125"/><rect x="821" y="814" width="22" height="22" fill="#2a2b2e"/><path d="M827 822H837L832 829Z" fill="#ddd"/><text class="f" x="514" y="830">Position</text><use href="#sq" x="853" y="821"/>
<text class="l" x="346" y="854">Joint Drive Strength</text><rect x="506" y="838" width="337" height="22" rx="2" fill="#1f2125"/><text class="f" x="514" y="854">10000000.0</text><use href="#sq" x="853" y="845"/>
<text class="l" x="346" y="878" textLength="157" lengthAdjust="spacingAndGlyphs">Joint Position Drive Damping</text><rect x="506" y="862" width="337" height="22" rx="2" fill="#1f2125"/><text class="f" x="514" y="878">100000.0</text><use href="#sq" x="853" y="869"/>
<text class="l" x="346" y="919">Import URDF</text><rect x="506" y="904" width="124" height="20" rx="2" fill="#232426"/><text class="f" x="509" y="919" textLength="118" lengthAdjust="spacingAndGlyphs">SELECT AND IMPORT</text>
<rect x="635" y="914" width="736" height="1" fill="#555"/><use href="#sq" x="1381" y="912"/>

<text class="l" x="873" y="720">Clean Stage</text><use href="#uc" x="1034" y="708"/><rect x="1061" y="715" width="310" height="1" fill="#555"/><use href="#sq" x="1381" y="713"/>
<text class="l" x="873" y="740">Convex Decomposition</text><use href="#uc" x="1034" y="728"/><rect x="1061" y="735" width="310" height="1" fill="#555"/><use href="#sq" x="1381" y="733"/>
<text class="l" x="873" y="760">Self Collision</text><use href="#uc" x="1034" y="748"/><rect x="1061" y="755" width="310" height="1" fill="#555"/><use href="#sq" x="1381" y="753"/>
<text class="l" x="873" y="780">Create Physics Scene</text><use href="#uk" x="1034" y="768"/><rect x="1061" y="775" width="310" height="1" fill="#555"/><use href="#sq" x="1381" y="773"/>
<text class="l" x="873" y="800">Make Default Prim</text><use href="#uk" x="1034" y="788"/><rect x="1061" y="795" width="310" height="1" fill="#555"/><use href="#sq" x="1381" y="793"/>

<rect x="1397" y="680" width="83" height="266" fill="#464646"/>
<path d="M1463 693 1458 697 1463 701ZM1469 693 1464 697 1469 701Z" fill="#eee"/>
<path d="M1399 711.5H1478M1399 740.5H1478M1399 769.5H1478M1399 798.5H1478M1399 827.5H1478" stroke="#2b2b2b"/>
<text class="l" x="1438" y="730" text-anchor="middle">Physics</text><text class="l" x="1438" y="759" text-anchor="middle">Import</text><text class="l" x="1438" y="788" text-anchor="middle">Mapping</text><text class="l" x="1438" y="817" text-anchor="middle">Geometry</text>

<rect x="342" y="946" width="1455" height="2" fill="#242424"/>
<rect x="342" y="948" width="1455" height="28" fill="#464646"/>

<!-- green highlight -->
<rect x="342.5" y="720.5" width="525" height="28" rx="1.5" fill="none" stroke="#00ff00" stroke-width="5"/>
</svg>
</body>
</html>
